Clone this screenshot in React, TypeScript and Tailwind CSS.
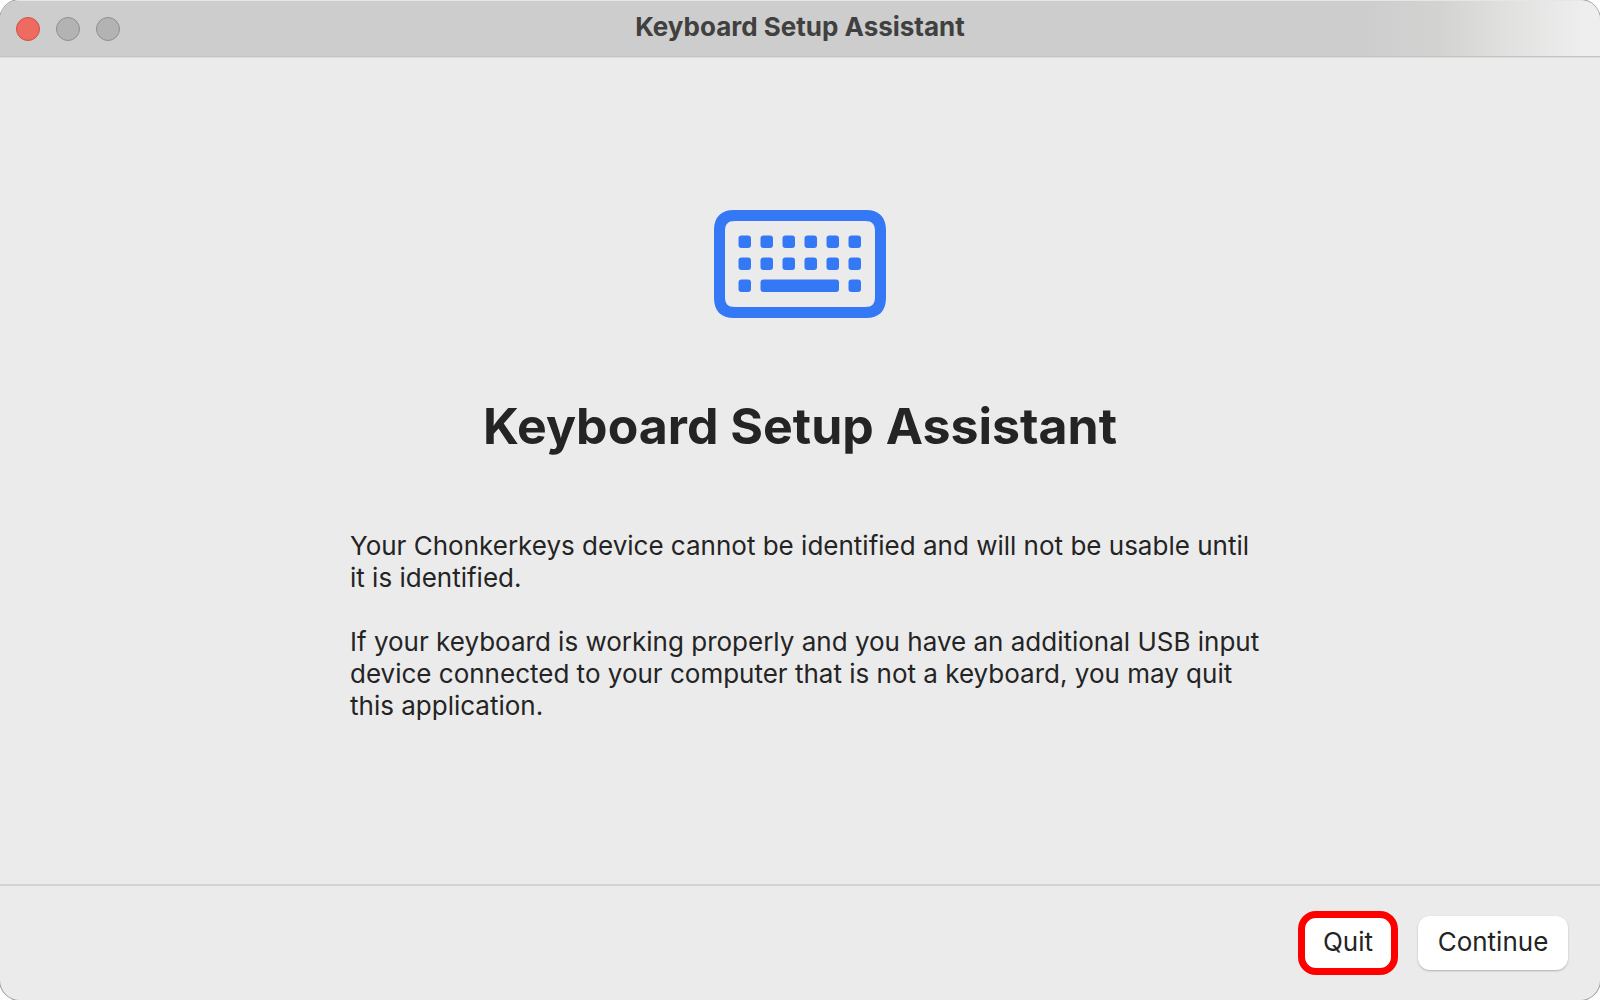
const keyColumns = [0, 1, 2, 3, 4, 5];

function KeyboardIcon() {
  return (
    <svg width="172" height="108" viewBox="0 0 172 108" aria-hidden="true" className="shrink-0">
      <path
        fillRule="evenodd"
        d="M20 0H152C165 0 172 7 172 20V88C172 101 165 108 152 108H20C7 108 0 101 0 88V20C0 7 7 0 20 0ZM21 11C14 11 11 14 11 21V87C11 94 14 97 21 97H151C158 97 161 94 161 87V21C161 14 158 11 151 11Z"
        fill="#3478f6"
      />
      <g fill="#3478f6">
        {keyColumns.map((c) => (
          <rect key={`a${c}`} x={24.5 + c * 22} y="25.5" width="12.5" height="12.5" rx="3" />
        ))}
        {keyColumns.map((c) => (
          <rect key={`b${c}`} x={24.5 + c * 22} y="47.5" width="12.5" height="12.5" rx="3" />
        ))}
        <rect x="24.5" y="69.5" width="12.5" height="12.5" rx="3" />
        <rect x="46.5" y="69.5" width="78.5" height="12.5" rx="3" />
        <rect x="134.5" y="69.5" width="12.5" height="12.5" rx="3" />
      </g>
    </svg>
  );
}

export default function App() {
  return (
    <div className="min-h-screen bg-white font-['Inter',sans-serif] text-[#242424]">
      <div className="flex min-h-screen flex-col overflow-hidden rounded-[20px] bg-[#ebebeb] shadow-[0_0_0_1px_#a0a0a0]">
        <header className="grid h-[57px] shrink-0 grid-cols-[1fr_auto_1fr] items-center border-y border-t-[#e6e6e6] border-b-[#c4c4c4] bg-[linear-gradient(to_right,#cdcdcd_85%,#d3d3d2_90%,#e0e0df_94%,#eeeeee_99%)] px-4">
          <div className="flex gap-4">
            <button type="button" aria-label="Close" className="size-6 rounded-full border border-[#d14f43] bg-[#ed6b60]" />
            <button type="button" aria-label="Minimize" className="size-6 rounded-full border border-[#8f8f8f] bg-[#b3b3b3]" />
            <button type="button" aria-label="Zoom" className="size-6 rounded-full border border-[#8f8f8f] bg-[#b3b3b3]" />
          </div>
          <p className="pb-1 text-[26px] leading-8 font-bold text-[#404040]">Keyboard Setup Assistant</p>
        </header>

        <main className="flex grow flex-col items-center border-t border-[#dedede] px-8 pt-[152px]">
          <KeyboardIcon />
          <h1 className="mt-[78px] text-[50px] leading-[60px] font-bold">Keyboard Setup Assistant</h1>
          <div className="mt-[74px] flex w-full max-w-[920px] flex-col gap-8 pl-[10px] text-[26px] leading-8">
            <p>
              Your Chonkerkeys device cannot be identified and will not be usable until
              <br />
              it is identified.
            </p>
            <p>
              If your keyboard is working properly and you have an additional USB input
              <br />
              device connected to your computer that is not a keyboard, you may quit
              <br />
              this application.
            </p>
          </div>
        </main>

        <footer className="flex h-[116px] shrink-0 items-center justify-end gap-5 border-t-2 border-[#d3d3d3] px-8">
          <button type="button" className="h-16 w-[100px] rounded-[18px] border-[7px] border-[#ff0000] bg-white pb-0.5 text-[26px] leading-8">
            Quit
          </button>
          <button type="button" className="h-[54px] w-[150px] rounded-xl bg-white pb-0.5 text-[26px] leading-8 shadow-[0_1px_2px_#00000040]">
            Continue
          </button>
        </footer>
      </div>
    </div>
  );
}
